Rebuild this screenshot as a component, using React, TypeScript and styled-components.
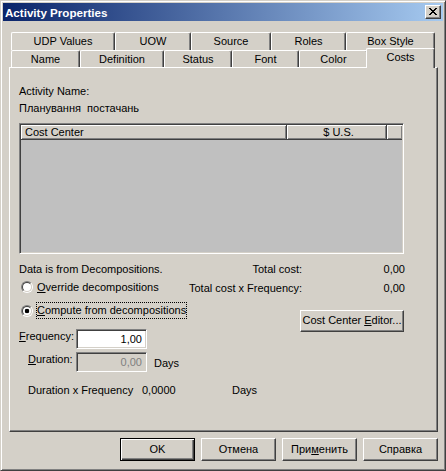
import React from 'react';
import styled, { createGlobalStyle } from 'styled-components';

const GlobalStyle = createGlobalStyle`
  html, body {
    margin: 0;
    padding: 0;
    background: #d4d0c8;
  }
  body {
    font-family: "Liberation Sans", Arial, sans-serif;
    font-size: 11px;
    color: #000;
  }
`;

const Window = styled.div`
  width: 446px;
  height: 471px;
  box-sizing: border-box;
  background: #d4d0c8;
  border: 1px solid;
  border-color: #d4d0c8 #404040 #404040 #d4d0c8;
  box-shadow: inset 1px 1px #fff, inset -1px -1px #808080;
  padding: 2px;
  display: flex;
  flex-direction: column;
`;

const TitleBar = styled.div`
  height: 18px;
  flex: none;
  display: flex;
  align-items: center;
  justify-content: space-between;
  background: linear-gradient(to right, #0a246a, #a6caf0);
  padding-left: 2px;
  padding-right: 2px;
`;

const Title = styled.span`
  color: #fff;
  font-weight: bold;
  font-size: 11.6px;
  line-height: 13px;
`;

const CloseButton = styled.div`
  width: 16px;
  height: 14px;
  box-sizing: border-box;
  background: #d4d0c8;
  border: 1px solid;
  border-color: #fff #404040 #404040 #fff;
  box-shadow: inset -1px -1px #808080;
  display: flex;
  align-items: center;
  justify-content: center;
  padding: 0 1px 1px 0;
`;

const Body = styled.div`
  padding: 11px 0 0 6px;
  display: flex;
  flex-direction: column;
`;

const TabControl = styled.div`
  width: 429px;
  display: flex;
  flex-direction: column;
`;

const TabRow = styled.div<{ $h: number }>`
  display: flex;
  height: ${p => p.$h}px;
  padding-left: 2px;
`;

const Tab = styled.div<{ $w: number; $active?: boolean }>`
  width: ${p => p.$w}px;
  height: ${p => (p.$active ? 20 : 18)}px;
  margin: ${p => (p.$active ? '-2px -2px 0 -2px' : '0')};
  flex: none;
  box-sizing: border-box;
  background: #d4d0c8;
  border-top: 1px solid #fff;
  border-left: 1px solid #fff;
  border-right: 1px solid #404040;
  border-radius: 2px 2px 0 0;
  box-shadow: inset -1px 0 #808080;
  text-align: center;
  line-height: ${p => (p.$active ? 16 : 17)}px;
  position: relative;
  z-index: ${p => (p.$active ? 2 : 0)};
`;

const Panel = styled.div`
  height: 365px;
  box-sizing: border-box;
  border: 1px solid;
  border-color: #fff #404040 #404040 #fff;
  box-shadow: inset -1px -1px #808080;
  padding: 17px 0 0 9px;
  display: flex;
  flex-direction: column;
  position: relative;
  z-index: 1;
`;

const Text = styled.div<{ $mt?: number }>`
  line-height: 13px;
  margin-top: ${p => p.$mt ?? 0}px;
  white-space: pre;
`;

const ListView = styled.div`
  width: 385px;
  height: 131px;
  margin-top: 8px;
  box-sizing: border-box;
  border: 1px solid;
  border-color: #808080 #fff #fff #808080;
  box-shadow: inset 1px 1px #404040, inset -1px -1px #d4d0c8;
  padding: 1px;
  display: flex;
  flex-direction: column;
  background: #c0c0c0;
`;

const Header = styled.div`
  display: flex;
  height: 15px;
  flex: none;
`;

const HeaderCell = styled.div<{ $w?: number; $center?: boolean }>`
  ${p => (p.$w ? `width: ${p.$w}px; flex: none;` : 'flex: 1;')}
  box-sizing: border-box;
  background: #d4d0c8;
  border-right: ${p => (p.$w ? '1px solid #404040' : '0')};
  border-bottom: 1px solid #404040;
  box-shadow: inset 1px 1px #fff, inset -1px -1px #808080;
  line-height: 14px;
  padding-left: 4px;
  text-align: ${p => (p.$center ? 'center' : 'left')};
`;

const StatRow = styled.div<{ $mt: number; $h: number }>`
  display: grid;
  grid-template-columns: 170px 113px 103px;
  height: ${p => p.$h}px;
  margin-top: ${p => p.$mt}px;
  line-height: 13px;
`;

const StatCell = styled.div<{ $pt?: number; $right?: boolean }>`
  padding-top: ${p => p.$pt ?? 0}px;
  text-align: ${p => (p.$right ? 'right' : 'left')};
  white-space: pre;
`;

const RadioLine = styled.div<{ $h?: number }>`
  display: flex;
  align-items: center;
  gap: 4px;
  padding-left: 2px;
  height: ${p => (p.$h ? `${p.$h}px` : '100%')};
`;

const RadioDot = styled.span<{ $checked?: boolean }>`
  width: 12px;
  height: 12px;
  flex: none;
  box-sizing: border-box;
  border-radius: 50%;
  border: 1px solid;
  border-color: #808080 #fff #fff #808080;
  display: flex;
  align-items: center;
  justify-content: center;
  &::before {
    content: '';
    width: 10px;
    height: 10px;
    box-sizing: border-box;
    border-radius: 50%;
    border: 1px solid;
    border-color: #404040 #d4d0c8 #d4d0c8 #404040;
    background: ${p =>
      p.$checked ? 'radial-gradient(circle, #000 0 2px, #fff 2.6px)' : '#fff'};
  }
`;

const FocusLabel = styled.span`
  border: 1px dotted #000;
  margin-left: -1px;
  padding: 1px 0 1px 0;
  line-height: 13px;
`;

const U = styled.span`
  text-decoration: underline;
  text-underline-offset: 1px;
`;

const Lower = styled.div`
  display: flex;
  margin-top: 7px;
`;

const LeftCol = styled.div`
  width: 281px;
  display: flex;
  flex-direction: column;
`;

const RightCol = styled.div`
  padding-top: 8px;
`;

const FieldRow = styled.div<{ $mt: number }>`
  display: flex;
  margin-top: ${p => p.$mt}px;
  line-height: 13px;
`;

const FieldLabel = styled.div<{ $indent?: number }>`
  width: 57px;
  box-sizing: border-box;
  padding-left: ${p => p.$indent ?? 0}px;
  padding-top: 1px;
`;

const Input = styled.div<{ $disabled?: boolean }>`
  width: 71px;
  height: 20px;
  box-sizing: border-box;
  border: 1px solid;
  border-color: #808080 #fff #fff #808080;
  box-shadow: inset 1px 1px #404040, inset -1px -1px #d4d0c8;
  background: ${p => (p.$disabled ? '#d4d0c8' : '#fff')};
  color: ${p => (p.$disabled ? '#808080' : '#000')};
  text-align: right;
  padding: 3px 4px 0 0;
`;

const Unit = styled.div`
  margin-left: 7px;
  padding-top: 5px;
`;

const Button = styled.div<{ $w?: number; $h?: number; $default?: boolean }>`
  width: ${p => p.$w ?? 75}px;
  height: ${p => p.$h ?? 23}px;
  box-sizing: border-box;
  background: #d4d0c8;
  border: 1px solid;
  border-color: ${p => (p.$default ? '#000' : '#fff #404040 #404040 #fff')};
  box-shadow: ${p =>
    p.$default
      ? 'inset 1px 1px #fff, inset -1px -1px #404040, inset -2px -2px #808080'
      : 'inset -1px -1px #808080'};
  display: flex;
  align-items: center;
  justify-content: center;
  line-height: 13px;
  padding-bottom: 1px;
`;

const ProductRow = styled.div`
  display: flex;
  margin-top: 12px;
  padding-left: 9px;
  line-height: 13px;
`;

const Cell = styled.div<{ $w: number }>`
  width: ${p => p.$w}px;
  flex: none;
`;

const ButtonRow = styled.div`
  display: flex;
  justify-content: flex-end;
  gap: 6px;
  margin-top: 6px;
  width: 429px;
`;

const CloseGlyph = () => {
  const px = [
    '11....11',
    '.11..11.',
    '..1111..',
    '...11...',
    '..1111..',
    '.11..11.',
    '11....11',
  ];
  return (
    <svg width="8" height="7" viewBox="0 0 8 7" shapeRendering="crispEdges">
      {px.flatMap((row, y) =>
        row.split('').map((c, x) => (c === '1' ? <rect key={`${x}-${y}`} x={x} y={y} width="1" height="1" fill="#000" /> : null))
      )}
    </svg>
  );
};

const upperTabs: [string, number][] = [
  ['UDP Values', 104],
  ['UOW', 76],
  ['Source', 80],
  ['Roles', 75],
  ['Box Style', 89],
];

const lowerTabs: [string, number][] = [
  ['Name', 69],
  ['Definition', 84],
  ['Status', 68],
  ['Font', 67],
  ['Color', 69],
  ['Costs', 69],
];

export default function App() {
  return (
    <>
      <GlobalStyle />
      <Window>
        <TitleBar>
          <Title>Activity Properties</Title>
          <CloseButton>
            <CloseGlyph />
          </CloseButton>
        </TitleBar>
        <Body>
          <TabControl>
            <TabRow $h={18}>
              {upperTabs.map(([t, w]) => (
                <Tab key={t} $w={w}>{t}</Tab>
              ))}
            </TabRow>
            <TabRow $h={17}>
              {lowerTabs.map(([t, w]) => (
                <Tab key={t} $w={w} $active={t === 'Costs'}>{t}</Tab>
              ))}
            </TabRow>
            <Panel>
              <Text>Activity Name:</Text>
              <Text $mt={4}>Планування  постачань</Text>
              <ListView>
                <Header>
                  <HeaderCell $w={266}>Cost Center</HeaderCell>
                  <HeaderCell $w={100} $center>$ U.S.</HeaderCell>
                  <HeaderCell />
                </Header>
              </ListView>

              <StatRow $mt={9} $h={13}>
                <StatCell>Data is from Decompositions.</StatCell>
                <StatCell $right>Total cost:</StatCell>
                <StatCell $right>0,00</StatCell>
              </StatRow>
              <StatRow $mt={3} $h={16}>
                <RadioLine>
                  <RadioDot />
                  <span><U>O</U>verride decompositions</span>
                </RadioLine>
                <StatCell $pt={3} $right>Total cost x Frequency:</StatCell>
                <StatCell $pt={3} $right>0,00</StatCell>
              </StatRow>

              <Lower>
                <LeftCol>
                  <RadioLine $h={17}>
                    <RadioDot $checked />
                    <FocusLabel><U>C</U>ompute from decompositions</FocusLabel>
                  </RadioLine>
                  <FieldRow $mt={10}>
                    <FieldLabel><U>F</U>requency:</FieldLabel>
                    <Input>1,00</Input>
                  </FieldRow>
                  <FieldRow $mt={3}>
                    <FieldLabel $indent={9}><U>D</U>uration:</FieldLabel>
                    <Input $disabled>0,00</Input>
                    <Unit>Days</Unit>
                  </FieldRow>
                </LeftCol>
                <RightCol>
                  <Button $w={104} $h={22}>
                    <span>Cost Center <U>E</U>ditor...</span>
                  </Button>
                </RightCol>
              </Lower>

              <ProductRow>
                <Cell $w={114}>Duration x Frequency</Cell>
                <Cell $w={90}>0,0000</Cell>
                <Cell $w={40}>Days</Cell>
              </ProductRow>
            </Panel>
          </TabControl>
          <ButtonRow>
            <Button $default>OK</Button>
            <Button>Отмена</Button>
            <Button>При<U>м</U>енить</Button>
            <Button>Справка</Button>
          </ButtonRow>
        </Body>
      </Window>
    </>
  );
}
